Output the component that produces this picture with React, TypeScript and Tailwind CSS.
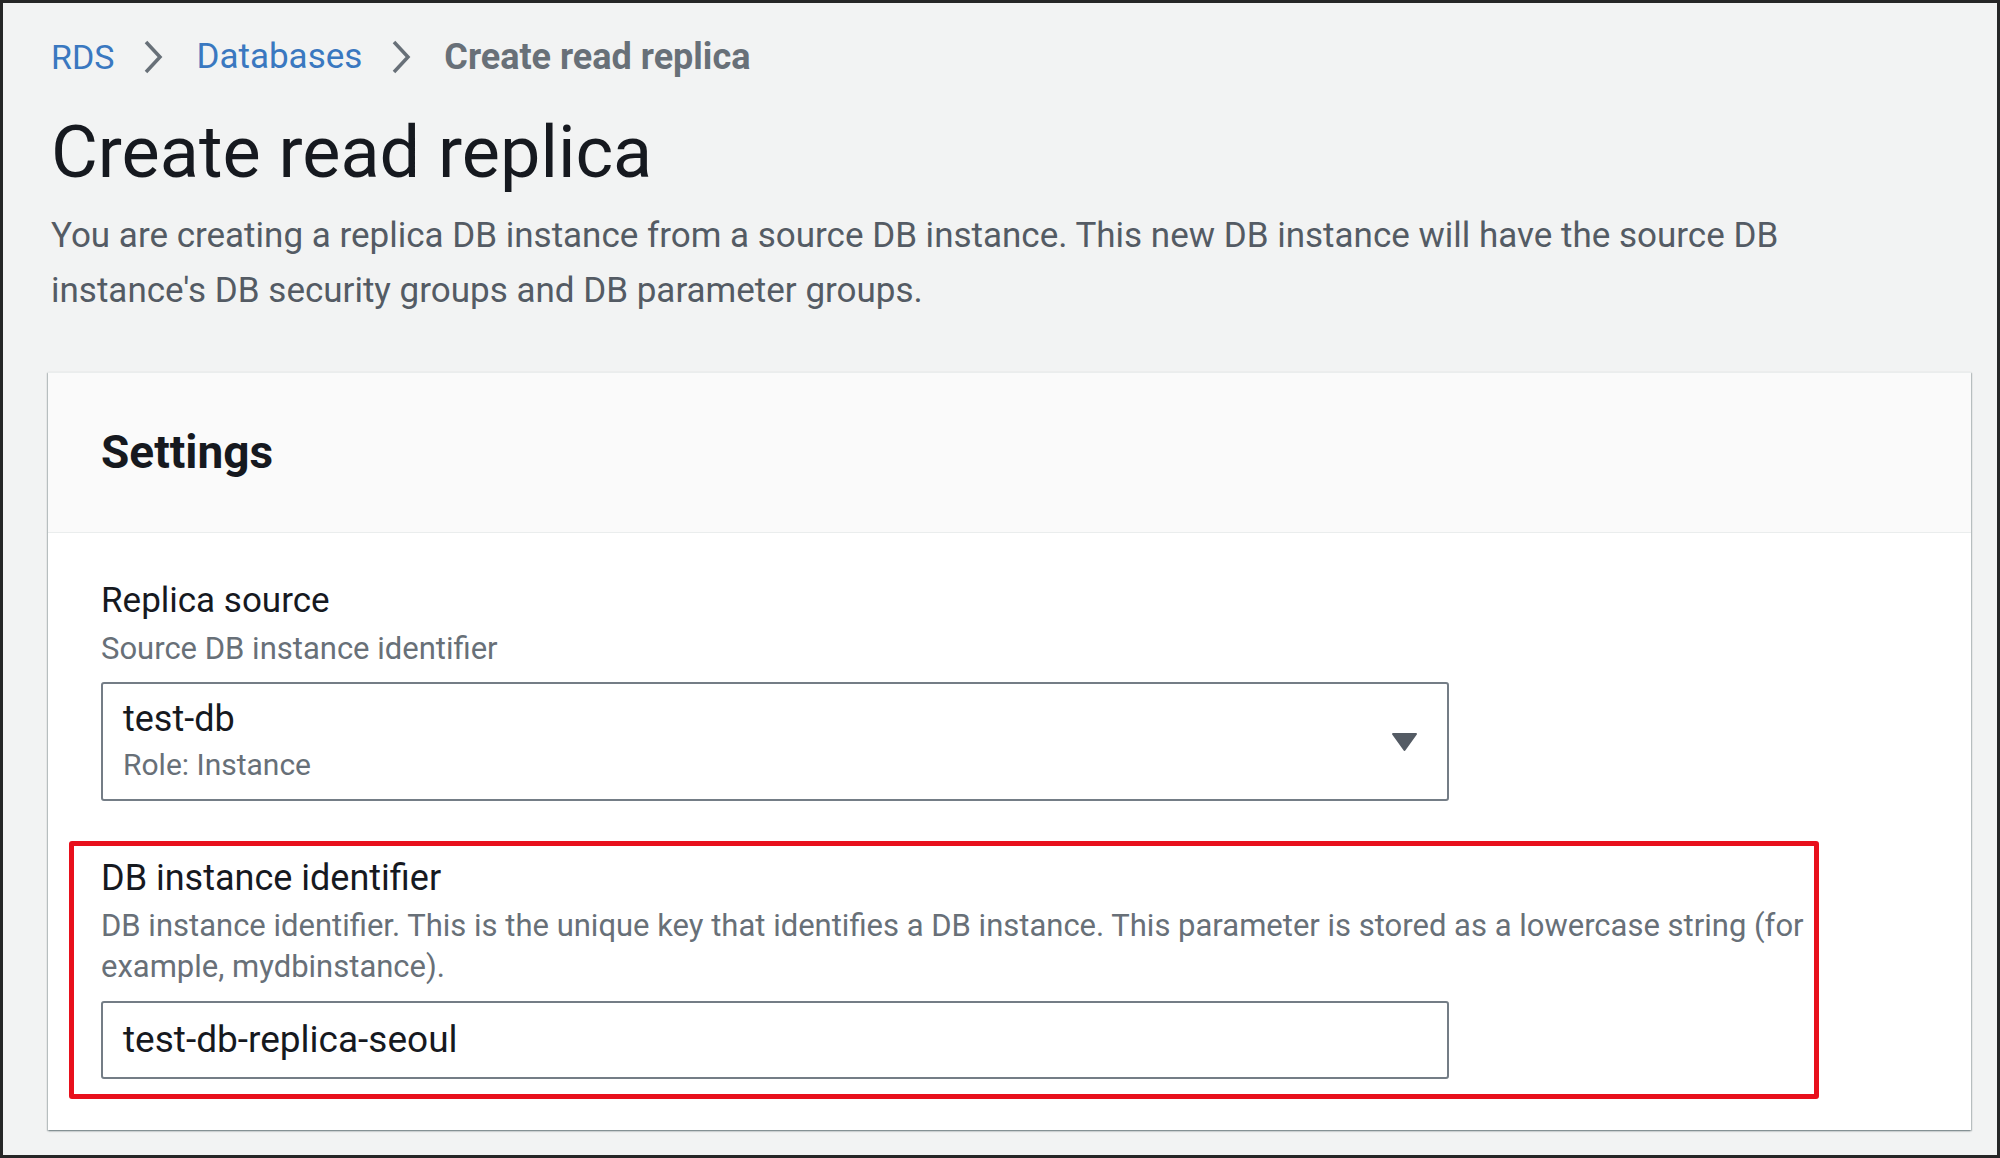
export default function App() {
  const font = { fontFamily: "Roboto, 'Noto Sans', sans-serif" };

  return (
    <div
      className="w-[2000px] h-[1158px] bg-[#f2f3f3] border-[3px] border-[#262626] pl-[45px] pr-[26px] pt-[32px] overflow-hidden"
      style={font}
    >
      {/* BREADCRUMB */}
      <nav className="flex items-center h-[44px] text-[34px] leading-[44px]">
        <span className="text-[#3a78c0] ml-[3px]">RDS</span>
        <svg className="ml-[27px] mr-[31px]" width="24" height="36" viewBox="0 0 24 36">
          <path d="M5 3 L19 18 L5 33" fill="none" stroke="#687078" strokeWidth="3.5" />
        </svg>
        <span className="text-[#3a78c0] text-[35px]">Databases</span>
        <svg className="ml-[27px] mr-[31px]" width="24" height="36" viewBox="0 0 24 36">
          <path d="M5 3 L19 18 L5 33" fill="none" stroke="#687078" strokeWidth="3.5" />
        </svg>
        <span className="text-[#687078] font-bold text-[36px]">Create read replica</span>
      </nav>

      {/* TITLE */}
      <h1 className="mt-[34px] ml-[3px] text-[72px] leading-[80px] text-[#16191f] font-normal">
        Create read replica
      </h1>

      <p className="mt-[15px] ml-[3px] text-[35px] leading-[55px] text-[#545b64] whitespace-nowrap">
        You are creating a replica DB instance from a source DB instance. This new DB instance will have the source DB
        <br />
        instance's DB security groups and DB parameter groups.
      </p>

      {/* SETTINGS CARD */}
      <section className="mt-[54px] w-[1923px] bg-white border-t border-[#eaeded] shadow-[0_1px_2px_rgba(0,28,36,0.35),1px_1px_1px_rgba(0,28,36,0.15),-1px_1px_1px_rgba(0,28,36,0.15)]">
        <div className="h-[160px] bg-[#fafafa] border-b border-[#eaeded] flex items-center pl-[53px]">
          <h2 className="text-[46px] font-bold text-[#16191f]">Settings</h2>
        </div>

        <div className="pl-[53px] pt-[48px] pb-[31px]">
          <div className="text-[35px] leading-[40px] text-[#16191f]">Replica source</div>
          <div className="mt-[8px] text-[31px] leading-[40px] text-[#687078]">Source DB instance identifier</div>

          <div className="mt-[13px] w-[1348px] h-[119px] border-2 border-[#747d86] rounded-[3px] flex items-center justify-between pl-[20px] pr-[29px]">
            <div className="flex flex-col">
              <span className="text-[36px] leading-[40px] text-[#16191f]">test-db</span>
              <span className="mt-[6px] text-[30px] leading-[40px] text-[#687078]">Role: Instance</span>
            </div>
            <svg width="27" height="20" viewBox="0 0 27 20">
              <path d="M2 2 L25 2 L13.5 18 Z" fill="#545b64" stroke="#545b64" strokeWidth="2" strokeLinejoin="round" />
            </svg>
          </div>

          {/* highlighted field */}
          <div className="mt-[40px] -ml-[32px] w-[1750px] border-[5px] border-[#e8101c] rounded-[3px] pl-[27px] pt-[12px] pb-[15px]">
            <div className="text-[36px] leading-[40px] text-[#16191f]">DB instance identifier</div>
            <p className="mt-[7px] text-[31px] leading-[41px] text-[#687078] whitespace-nowrap">
              DB instance identifier. This is the unique key that identifies a DB instance. This parameter is stored as a lowercase string (for
              <br />
              example, mydbinstance).
            </p>
            <div className="mt-[14px] w-[1348px] h-[78px] border-2 border-[#747d86] rounded-[3px] flex items-center pl-[20px]">
              <span className="text-[37px] text-[#16191f]">test-db-replica-seoul</span>
            </div>
          </div>
        </div>
      </section>
    </div>
  );
}
